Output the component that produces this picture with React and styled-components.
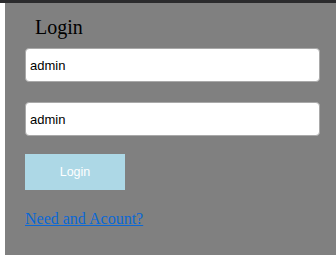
import React from "react";
import styled, { createGlobalStyle } from "styled-components";

const Global = createGlobalStyle`
  html, body { margin: 0; padding: 0; background: #ffffff; }
  #root { height: 255px; }
`;

const Page = styled.div`
  display: flex;
  flex-direction: column;
  height: 255px;
  overflow: hidden;
`;

const TopBar = styled.div`
  height: 3px;
  background: #2b2b2d;
  flex: none;
`;

const Body = styled.div`
  display: flex;
  flex: 1;
  background: #ffffff;
`;

const Gutter = styled.div`
  width: 5px;
  flex: none;
  background: #ffffff;
`;

const Panel = styled.form`
  flex: 1;
  background: #808080;
  padding: 14px 16px 0 20px;
  display: flex;
  flex-direction: column;
  align-items: flex-start;
`;

const Title = styled.h2`
  margin: 0 0 11px 10px;
  font-family: "Liberation Serif", "Times New Roman", serif;
  font-weight: normal;
  font-size: 20px;
  line-height: 20px;
  color: #000;
`;

const Field = styled.input`
  box-sizing: border-box;
  width: 295px;
  height: 34px;
  margin: 0 0 ${(p) => p.$gap}px 0;
  padding: 0 4px;
  border: 1px solid #a9a9a9;
  border-radius: 4px;
  background: #fff;
  font-family: "Liberation Sans", Arial, sans-serif;
  font-size: 13px;
  color: #000;
  outline: none;
`;

const Button = styled.button`
  width: 100px;
  height: 36px;
  border: none;
  background: #add8e6;
  color: #ffffff;
  font-family: "Liberation Sans", Arial, sans-serif;
  font-size: 12.5px;
  padding: 0;
  margin: 0 0 20px 0;
`;

const Link = styled.a`
  font-family: "Liberation Serif", "Times New Roman", serif;
  font-size: 16px;
  line-height: 18px;
  color: #0a68d6;
  text-decoration: underline;
`;

export default function App() {
  return (
    <>
      <Global />
      <Page>
        <TopBar />
        <Body>
          <Gutter />
          <Panel onSubmit={(e) => e.preventDefault()}>
            <Title>Login</Title>
            <Field type="text" defaultValue="admin" $gap={20} />
            <Field type="text" defaultValue="admin" $gap={18} />
            <Button type="button">Login</Button>
            <Link href="#">Need and Acount?</Link>
          </Panel>
        </Body>
      </Page>
    </>
  );
}
